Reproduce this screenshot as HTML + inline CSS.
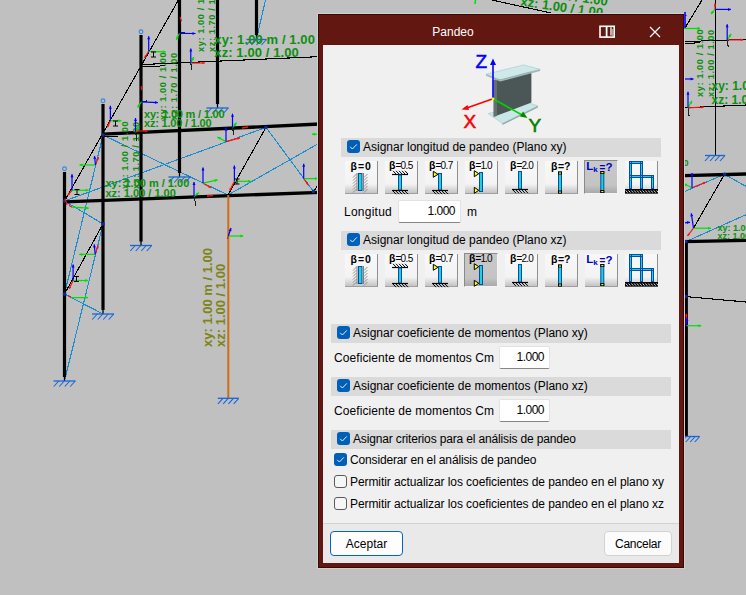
<!DOCTYPE html><html><head><meta charset="utf-8"><style>
*{margin:0;padding:0;box-sizing:border-box}
html,body{width:746px;height:595px;overflow:hidden;background:#c0c0c0;font-family:"Liberation Sans",sans-serif}
.a{position:absolute}
.t{position:absolute;font-size:12px;color:#000;white-space:nowrap;line-height:14px}
.hdr{position:absolute;background:#dadada;height:19px}
.cb{position:absolute;width:13px;height:13px;border-radius:3px;background:#005fb8}
.cb svg{position:absolute;left:0;top:0}
.cbu{position:absolute;width:13px;height:13px;border-radius:3px;background:#f6f6f6;border:1px solid #5a5a5a}
.btn{position:absolute;width:33px;height:33px;background:linear-gradient(#f8f8f8 0%,#f3f3f3 72%,#c4c4c4 100%);border-right:1px solid #8f8f8f;border-bottom:1px solid #a0a0a0}
.btn.p{width:34px;height:34px;background:linear-gradient(#c8c8c8 0%,#c4c4c4 75%,#a9a9a9 100%);border:none;border-top:1px solid #8a8a8a;border-left:1px solid #8a8a8a;border-right:1px solid #f4f4f4;border-bottom:1px solid #f4f4f4}
.btn svg{position:absolute;left:0;top:0;overflow:visible}
.inp{position:absolute;background:#fff;border:1px solid #e2e2e2;border-bottom:1px solid #868686;border-radius:2px;font-size:12px;text-align:right;padding-right:5px;line-height:20px;color:#000;letter-spacing:-0.5px}
</style></head><body><svg class="a" style="left:0;top:0" width="746" height="595" viewBox="0 0 746 595"><rect width="746" height="595" fill="#c0c0c0"/>
<line x1="64.5" y1="201.0" x2="103.0" y2="224.0" stroke="#1a8cd0" stroke-width="1.1" shape-rendering="crispEdges"/>
<line x1="103.0" y1="135.0" x2="65.0" y2="292.0" stroke="#1a8cd0" stroke-width="1.1" shape-rendering="crispEdges"/>
<line x1="103.0" y1="224.0" x2="64.5" y2="381.0" stroke="#1a8cd0" stroke-width="1.1" shape-rendering="crispEdges"/>
<line x1="64.5" y1="294.0" x2="103.0" y2="314.0" stroke="#1a8cd0" stroke-width="1.1" shape-rendering="crispEdges"/>
<line x1="64.5" y1="201.0" x2="266.0" y2="127.4" stroke="#1a8cd0" stroke-width="1.1" shape-rendering="crispEdges"/>
<line x1="103.0" y1="135.0" x2="228.0" y2="195.0" stroke="#1a8cd0" stroke-width="1.1" shape-rendering="crispEdges"/>
<line x1="266.0" y1="127.4" x2="313.5" y2="191.5" stroke="#1a8cd0" stroke-width="1.1" shape-rendering="crispEdges"/>
<line x1="228.0" y1="195.0" x2="330.0" y2="137.0" stroke="#1a8cd0" stroke-width="1.1" shape-rendering="crispEdges"/>
<line x1="256.5" y1="39.0" x2="265.5" y2="0.0" stroke="#1a8cd0" stroke-width="1.1" shape-rendering="crispEdges"/>
<line x1="684.0" y1="191.8" x2="724.5" y2="174.3" stroke="#1a8cd0" stroke-width="1.1" shape-rendering="crispEdges"/>
<line x1="724.5" y1="174.3" x2="746.0" y2="186.4" stroke="#1a8cd0" stroke-width="1.1" shape-rendering="crispEdges"/>
<line x1="686.0" y1="241.6" x2="746.0" y2="214.7" stroke="#1a8cd0" stroke-width="1.1" shape-rendering="crispEdges"/>
<line x1="178.4" y1="0.0" x2="64.5" y2="201.0" stroke="#000" stroke-width="1.1" shape-rendering="crispEdges"/>
<line x1="103.0" y1="224.0" x2="64.5" y2="294.0" stroke="#000" stroke-width="1.1" shape-rendering="crispEdges"/>
<line x1="266.0" y1="127.4" x2="228.0" y2="195.0" stroke="#000" stroke-width="1.1" shape-rendering="crispEdges"/>
<line x1="313.5" y1="191.5" x2="320.0" y2="182.0" stroke="#000" stroke-width="1.1" shape-rendering="crispEdges"/>
<line x1="491.8" y1="0.0" x2="553.4" y2="13.5" stroke="#000" stroke-width="1.1" shape-rendering="crispEdges"/>
<line x1="685.0" y1="28.0" x2="702.0" y2="0.0" stroke="#000" stroke-width="1.1" shape-rendering="crispEdges"/>
<line x1="724.5" y1="174.3" x2="693.5" y2="228.2" stroke="#000" stroke-width="1.1" shape-rendering="crispEdges"/>
<line x1="686.0" y1="296.6" x2="746.0" y2="302.0" stroke="#000" stroke-width="1.1" shape-rendering="crispEdges"/>
<line x1="141.0" y1="64.6" x2="320.0" y2="56.6" stroke="#000" stroke-width="1.1" shape-rendering="crispEdges"/>
<line x1="141.0" y1="66.8" x2="165.0" y2="65.8" stroke="#000" stroke-width="1.0" shape-rendering="crispEdges"/>
<line x1="684.0" y1="41.6" x2="746.0" y2="39.4" stroke="#000" stroke-width="1.0" shape-rendering="crispEdges"/>
<line x1="684.0" y1="43.4" x2="700.0" y2="42.8" stroke="#000" stroke-width="1.0" shape-rendering="crispEdges"/>
<line x1="684.0" y1="107.8" x2="746.0" y2="105.0" stroke="#000" stroke-width="1.1" shape-rendering="crispEdges"/>
<line x1="103.0" y1="136.8" x2="118.0" y2="136.2" stroke="#000" stroke-width="1.0" shape-rendering="crispEdges"/>
<line x1="715.5" y1="0.0" x2="715.5" y2="155.0" stroke="#000" stroke-width="1" shape-rendering="crispEdges"/>
<line x1="103.0" y1="134.2" x2="320.0" y2="124.0" stroke="#000" stroke-width="3.3"/>
<line x1="64.5" y1="201.8" x2="320.0" y2="192.3" stroke="#000" stroke-width="3.3"/>
<line x1="684.0" y1="175.6" x2="746.0" y2="174.0" stroke="#000" stroke-width="3.3"/>
<line x1="684.0" y1="241.6" x2="746.0" y2="240.3" stroke="#000" stroke-width="3.3"/>
<line x1="64.5" y1="172.0" x2="64.5" y2="377.0" stroke="#000" stroke-width="3.2"/>
<line x1="64.5" y1="377.0" x2="64.5" y2="381.0" stroke="#000" stroke-width="1.3"/>
<circle cx="64.5" cy="168.8" r="1.9" fill="none" stroke="#2f86e8" stroke-width="1.1"/>
<line x1="103.0" y1="104.0" x2="103.0" y2="310.0" stroke="#000" stroke-width="3.2"/>
<line x1="103.0" y1="310.0" x2="103.0" y2="314.0" stroke="#000" stroke-width="1.3"/>
<circle cx="103" cy="100.8" r="1.9" fill="none" stroke="#2f86e8" stroke-width="1.1"/>
<line x1="141.0" y1="35.0" x2="141.0" y2="241.5" stroke="#000" stroke-width="3.2"/>
<line x1="141.0" y1="241.0" x2="141.0" y2="245.5" stroke="#000" stroke-width="1.3"/>
<circle cx="141" cy="31.8" r="1.9" fill="none" stroke="#2f86e8" stroke-width="1.1"/>
<line x1="179.5" y1="0.0" x2="179.5" y2="173.0" stroke="#000" stroke-width="3.2"/>
<line x1="179.5" y1="173.0" x2="179.5" y2="177.0" stroke="#000" stroke-width="1.3"/>
<line x1="217.5" y1="0.0" x2="217.5" y2="104.0" stroke="#000" stroke-width="3.2"/>
<line x1="217.5" y1="104.0" x2="217.5" y2="108.0" stroke="#000" stroke-width="1.3"/>
<line x1="256.5" y1="0.0" x2="256.5" y2="35.0" stroke="#000" stroke-width="3.2"/>
<line x1="256.5" y1="35.0" x2="256.5" y2="39.5" stroke="#000" stroke-width="1.3"/>
<line x1="686.3" y1="241.0" x2="686.3" y2="436.0" stroke="#000" stroke-width="3.2"/>
<line x1="228.3" y1="195.0" x2="228.3" y2="398.0" stroke="#d06c14" stroke-width="2"/>
<circle cx="64.5" cy="201" r="1.8" fill="#0a2a9a"/>
<circle cx="103" cy="135" r="1.8" fill="#0a2a9a"/>
<circle cx="103" cy="224" r="1.8" fill="#0a2a9a"/>
<circle cx="64.5" cy="294" r="1.8" fill="#0a2a9a"/>
<circle cx="266" cy="127.4" r="1.8" fill="#0a2a9a"/>
<circle cx="313.5" cy="191.5" r="1.8" fill="#0a2a9a"/>
<circle cx="724.5" cy="174.3" r="1.8" fill="#0a2a9a"/>
<circle cx="686" cy="241.6" r="1.8" fill="#0a2a9a"/>
<circle cx="686" cy="296.6" r="1.8" fill="#0a2a9a"/>
<line x1="53.5" y1="381" x2="75.5" y2="381" stroke="#1666d8" stroke-width="1.3"/>
<line x1="58.75" y1="381" x2="53.75" y2="386.5" stroke="#1666d8" stroke-width="1.1"/>
<line x1="64.25" y1="381" x2="59.25" y2="386.5" stroke="#1666d8" stroke-width="1.1"/>
<line x1="69.75" y1="381" x2="64.75" y2="386.5" stroke="#1666d8" stroke-width="1.1"/>
<line x1="75.25" y1="381" x2="70.25" y2="386.5" stroke="#1666d8" stroke-width="1.1"/>
<line x1="92.0" y1="314" x2="114.0" y2="314" stroke="#1666d8" stroke-width="1.3"/>
<line x1="97.25" y1="314" x2="92.25" y2="319.5" stroke="#1666d8" stroke-width="1.1"/>
<line x1="102.75" y1="314" x2="97.75" y2="319.5" stroke="#1666d8" stroke-width="1.1"/>
<line x1="108.25" y1="314" x2="103.25" y2="319.5" stroke="#1666d8" stroke-width="1.1"/>
<line x1="113.75" y1="314" x2="108.75" y2="319.5" stroke="#1666d8" stroke-width="1.1"/>
<line x1="130.0" y1="245.5" x2="152.0" y2="245.5" stroke="#1666d8" stroke-width="1.3"/>
<line x1="135.25" y1="245.5" x2="130.25" y2="251.0" stroke="#1666d8" stroke-width="1.1"/>
<line x1="140.75" y1="245.5" x2="135.75" y2="251.0" stroke="#1666d8" stroke-width="1.1"/>
<line x1="146.25" y1="245.5" x2="141.25" y2="251.0" stroke="#1666d8" stroke-width="1.1"/>
<line x1="151.75" y1="245.5" x2="146.75" y2="251.0" stroke="#1666d8" stroke-width="1.1"/>
<line x1="168.5" y1="177" x2="190.5" y2="177" stroke="#1666d8" stroke-width="1.3"/>
<line x1="173.75" y1="177" x2="168.75" y2="182.5" stroke="#1666d8" stroke-width="1.1"/>
<line x1="179.25" y1="177" x2="174.25" y2="182.5" stroke="#1666d8" stroke-width="1.1"/>
<line x1="184.75" y1="177" x2="179.75" y2="182.5" stroke="#1666d8" stroke-width="1.1"/>
<line x1="190.25" y1="177" x2="185.25" y2="182.5" stroke="#1666d8" stroke-width="1.1"/>
<line x1="206.5" y1="108" x2="228.5" y2="108" stroke="#1666d8" stroke-width="1.3"/>
<line x1="211.75" y1="108" x2="206.75" y2="113.5" stroke="#1666d8" stroke-width="1.1"/>
<line x1="217.25" y1="108" x2="212.25" y2="113.5" stroke="#1666d8" stroke-width="1.1"/>
<line x1="222.75" y1="108" x2="217.75" y2="113.5" stroke="#1666d8" stroke-width="1.1"/>
<line x1="228.25" y1="108" x2="223.25" y2="113.5" stroke="#1666d8" stroke-width="1.1"/>
<line x1="246.5" y1="39.5" x2="266.5" y2="39.5" stroke="#1666d8" stroke-width="1.3"/>
<line x1="251.5" y1="39.5" x2="246.5" y2="45.0" stroke="#1666d8" stroke-width="1.1"/>
<line x1="256.5" y1="39.5" x2="251.5" y2="45.0" stroke="#1666d8" stroke-width="1.1"/>
<line x1="261.5" y1="39.5" x2="256.5" y2="45.0" stroke="#1666d8" stroke-width="1.1"/>
<line x1="266.5" y1="39.5" x2="261.5" y2="45.0" stroke="#1666d8" stroke-width="1.1"/>
<line x1="217.8" y1="398.3" x2="238.8" y2="398.3" stroke="#1666d8" stroke-width="1.3"/>
<line x1="222.925" y1="398.3" x2="217.925" y2="403.8" stroke="#1666d8" stroke-width="1.1"/>
<line x1="228.175" y1="398.3" x2="223.175" y2="403.8" stroke="#1666d8" stroke-width="1.1"/>
<line x1="233.425" y1="398.3" x2="228.425" y2="403.8" stroke="#1666d8" stroke-width="1.1"/>
<line x1="238.675" y1="398.3" x2="233.675" y2="403.8" stroke="#1666d8" stroke-width="1.1"/>
<line x1="705.0" y1="155.5" x2="725.0" y2="155.5" stroke="#1666d8" stroke-width="1.3"/>
<line x1="710.0" y1="155.5" x2="705.0" y2="161.0" stroke="#1666d8" stroke-width="1.1"/>
<line x1="715.0" y1="155.5" x2="710.0" y2="161.0" stroke="#1666d8" stroke-width="1.1"/>
<line x1="720.0" y1="155.5" x2="715.0" y2="161.0" stroke="#1666d8" stroke-width="1.1"/>
<line x1="725.0" y1="155.5" x2="720.0" y2="161.0" stroke="#1666d8" stroke-width="1.1"/>
<line x1="681.5" y1="436.5" x2="699.5" y2="436.5" stroke="#1666d8" stroke-width="1.3"/>
<line x1="686.25" y1="436.5" x2="681.25" y2="442.0" stroke="#1666d8" stroke-width="1.1"/>
<line x1="690.75" y1="436.5" x2="685.75" y2="442.0" stroke="#1666d8" stroke-width="1.1"/>
<line x1="695.25" y1="436.5" x2="690.25" y2="442.0" stroke="#1666d8" stroke-width="1.1"/>
<line x1="699.75" y1="436.5" x2="694.75" y2="442.0" stroke="#1666d8" stroke-width="1.1"/>
<text x="214.3" y="43.7" font-family="Liberation Sans" font-size="13" font-weight="bold" fill="#0c900c" text-anchor="start" letter-spacing="0.1">xy: 1.00 m / 1.00</text>
<text x="214.3" y="56.8" font-family="Liberation Sans" font-size="13" font-weight="bold" fill="#0c900c" text-anchor="start" letter-spacing="0.1">xz: 1.00 / 1.00</text>
<text x="144" y="117.7" font-family="Liberation Sans" font-size="11" font-weight="bold" fill="#0c900c" text-anchor="start" letter-spacing="-0.2">xy: 1.00 m / 1.00</text>
<text x="144" y="126.5" font-family="Liberation Sans" font-size="11" font-weight="bold" fill="#0c900c" text-anchor="start" letter-spacing="-0.2">xz: 1.00 / 1.00</text>
<text x="105.5" y="187.2" font-family="Liberation Sans" font-size="11" font-weight="bold" fill="#0c900c" text-anchor="start" letter-spacing="0">xy: 1.00 m / 1.00</text>
<text x="105.5" y="197.2" font-family="Liberation Sans" font-size="11" font-weight="bold" fill="#0c900c" text-anchor="start" letter-spacing="0">xz: 1.00 / 1.00</text>
<text x="204.2" y="52" font-family="Liberation Sans" font-size="9.2" font-weight="bold" fill="#0c900c" text-anchor="start" letter-spacing="0.6" transform="rotate(-90 204.2 52)">xy: 1.00 / 1.00</text>
<text x="214.7" y="52" font-family="Liberation Sans" font-size="9.2" font-weight="bold" fill="#0c900c" text-anchor="start" letter-spacing="0.6" transform="rotate(-90 214.7 52)">xz: 1.70 / 1.00</text>
<text x="165.5" y="120" font-family="Liberation Sans" font-size="9.2" font-weight="bold" fill="#0c900c" text-anchor="start" letter-spacing="0.6" transform="rotate(-90 165.5 120)">xy: 1.00 / 1.00</text>
<text x="176.5" y="120" font-family="Liberation Sans" font-size="9.2" font-weight="bold" fill="#0c900c" text-anchor="start" letter-spacing="0.6" transform="rotate(-90 176.5 120)">xz: 1.70 / 1.00</text>
<text x="127.8" y="189" font-family="Liberation Sans" font-size="9.2" font-weight="bold" fill="#0c900c" text-anchor="start" letter-spacing="0.6" transform="rotate(-90 127.8 189)">xy: 1.00 / 1.00</text>
<text x="138.8" y="189" font-family="Liberation Sans" font-size="9.2" font-weight="bold" fill="#0c900c" text-anchor="start" letter-spacing="0.6" transform="rotate(-90 138.8 189)">xz: 1.70 / 1.00</text>
<text x="212.3" y="347" font-family="Liberation Sans" font-size="13" font-weight="bold" fill="#7f8418" text-anchor="start" letter-spacing="0" transform="rotate(-90 212.3 347)">xy: 1.00 m / 1.00</text>
<text x="225.3" y="347" font-family="Liberation Sans" font-size="13" font-weight="bold" fill="#7f8418" text-anchor="start" letter-spacing="0" transform="rotate(-90 225.3 347)">xz: 1.00 / 1.00</text>
<text x="703" y="97" font-family="Liberation Sans" font-size="9.2" font-weight="bold" fill="#0c900c" text-anchor="start" letter-spacing="0.6" transform="rotate(-90 703 97)">xy: 1.00 / 1.00</text>
<line x1="475.5" y1="0.0" x2="475.0" y2="4.0" stroke="#00e000" stroke-width="1.5"/>
<text x="713.5" y="97" font-family="Liberation Sans" font-size="9.2" font-weight="bold" fill="#0c900c" text-anchor="start" letter-spacing="0.6" transform="rotate(-90 713.5 97)">xz: 1.00 / 1.00</text>
<text x="711.5" y="90" font-family="Liberation Sans" font-size="12" font-weight="bold" fill="#0c900c" text-anchor="start" letter-spacing="0">xy: 1.00 m / 1.00</text>
<text x="711.5" y="104" font-family="Liberation Sans" font-size="12" font-weight="bold" fill="#0c900c" text-anchor="start" letter-spacing="0">xz: 1.00 / 1.00</text>
<text x="717.5" y="231" font-family="Liberation Sans" font-size="9" font-weight="bold" fill="#0c900c" text-anchor="start" letter-spacing="0">xy: 1.00 m</text>
<text x="717.5" y="239" font-family="Liberation Sans" font-size="9" font-weight="bold" fill="#0c900c" text-anchor="start" letter-spacing="0">xz: 1.00</text>
<text x="520" y="5.6" font-family="Liberation Sans" font-size="13" font-weight="bold" fill="#0c900c" text-anchor="start" letter-spacing="0" transform="rotate(8 520 5.6)">xz: 1.00 / 1.00</text>
<text x="509" y="-8" font-family="Liberation Sans" font-size="13" font-weight="bold" fill="#0c900c" text-anchor="start" letter-spacing="0" transform="rotate(8 509 -8)">xy: 1.00 m / 1.00</text>
<text x="671" y="165.5" font-family="Liberation Sans" font-size="9" font-weight="bold" fill="#0c900c" text-anchor="start" letter-spacing="0">1.00</text>
<line x1="110.4" y1="120.7" x2="107.4" y2="127.2" stroke="#ff1010" stroke-width="1.2"/>
<polygon points="107.4,127.2 107.3,124.4 109.6,125.5" fill="#ff1010"/>
<line x1="110.4" y1="120.7" x2="121.4" y2="120.7" stroke="#00e000" stroke-width="1.2"/>
<polygon points="121.4,120.7 118.4,122.2 118.4,119.2" fill="#00e000"/>
<line x1="110.4" y1="120.7" x2="110.4" y2="105.7" stroke="#0000ff" stroke-width="1.2"/>
<polygon points="110.4,105.7 111.9,108.7 108.9,108.7" fill="#0000ff"/>
<path d="M113.0 121.0h5M115.5 121.0v5M113.0 126.0h5" stroke="#000" stroke-width="1"/>
<line x1="148.7" y1="51.3" x2="144.5" y2="58.0" stroke="#ff1010" stroke-width="1.2"/>
<polygon points="144.5,58.0 144.8,55.2 146.9,56.5" fill="#ff1010"/>
<line x1="148.7" y1="51.3" x2="165.7" y2="51.8" stroke="#00e000" stroke-width="1.2"/>
<polygon points="165.7,51.8 162.7,53.2 162.7,50.2" fill="#00e000"/>
<line x1="148.7" y1="51.3" x2="148.7" y2="36.3" stroke="#0000ff" stroke-width="1.2"/>
<polygon points="148.7,36.3 150.2,39.3 147.2,39.3" fill="#0000ff"/>
<path d="M151.0 52.0h5M153.5 52.0v5M151.0 57.0h5" stroke="#000" stroke-width="1"/>
<line x1="179.5" y1="33.3" x2="184.5" y2="32.3" stroke="#202020" stroke-width="1.1" shape-rendering="crispEdges"/>
<line x1="179.5" y1="33.3" x2="176.3" y2="39.7" stroke="#00e000" stroke-width="1.2"/>
<polygon points="176.3,39.7 176.3,36.3 179.0,37.7" fill="#00e000"/>
<line x1="179.5" y1="33.3" x2="195.5" y2="33.5" stroke="#0000ff" stroke-width="1.2"/>
<polygon points="195.5,33.5 192.5,35.0 192.5,32.0" fill="#0000ff"/>
<line x1="141.5" y1="101.8" x2="147.5" y2="100.8" stroke="#202020" stroke-width="1.1" shape-rendering="crispEdges"/>
<line x1="141.5" y1="101.8" x2="137.5" y2="107.4" stroke="#00e000" stroke-width="1.2"/>
<polygon points="137.5,107.4 138.0,104.1 140.5,105.8" fill="#00e000"/>
<line x1="141.5" y1="101.8" x2="157.9" y2="102.6" stroke="#0000ff" stroke-width="1.2"/>
<polygon points="157.9,102.6 154.8,104.0 155.0,101.0" fill="#0000ff"/>
<line x1="180.0" y1="17.0" x2="181.5" y2="21.0" stroke="#ff1010" stroke-width="1.2"/>
<line x1="141.0" y1="86.0" x2="142.0" y2="90.0" stroke="#ff1010" stroke-width="1.2"/>
<line x1="65.0" y1="198.5" x2="67.0" y2="205.0" stroke="#ff1010" stroke-width="1.2"/>
<line x1="190.8" y1="63.0" x2="192.0" y2="69.5" stroke="#202020" stroke-width="1.1" shape-rendering="crispEdges"/>
<line x1="190.8" y1="63.0" x2="204.8" y2="63.0" stroke="#ff1010" stroke-width="1.2"/>
<polygon points="204.8,63.0 202.3,64.2 202.3,61.8" fill="#ff1010"/>
<line x1="190.8" y1="63.0" x2="193.8" y2="57.0" stroke="#00e000" stroke-width="1.2"/>
<polygon points="193.8,57.0 193.8,60.4 191.1,59.0" fill="#00e000"/>
<line x1="190.8" y1="63.0" x2="190.8" y2="48.5" stroke="#0000ff" stroke-width="1.2"/>
<polygon points="190.8,48.5 192.3,51.5 189.3,51.5" fill="#0000ff"/>
<line x1="135.5" y1="131.0" x2="137.0" y2="141.0" stroke="#202020" stroke-width="1.1" shape-rendering="crispEdges"/>
<line x1="135.5" y1="131.0" x2="147.5" y2="131.0" stroke="#ff1010" stroke-width="1.2"/>
<polygon points="147.5,131.0 145.0,132.2 145.0,129.8" fill="#ff1010"/>
<line x1="135.5" y1="131.0" x2="139.0" y2="126.0" stroke="#00e000" stroke-width="1.2"/>
<polygon points="139.0,126.0 138.5,129.3 136.1,127.6" fill="#00e000"/>
<line x1="135.5" y1="131.0" x2="135.5" y2="118.0" stroke="#0000ff" stroke-width="1.2"/>
<polygon points="135.5,118.0 137.0,121.0 134.0,121.0" fill="#0000ff"/>
<line x1="194.0" y1="196.6" x2="196.0" y2="205.6" stroke="#202020" stroke-width="1.1" shape-rendering="crispEdges"/>
<line x1="194.0" y1="196.6" x2="199.0" y2="192.6" stroke="#00e000" stroke-width="1.2"/>
<polygon points="199.0,192.6 197.6,195.6 195.7,193.3" fill="#00e000"/>
<line x1="194.0" y1="196.6" x2="194.0" y2="182.1" stroke="#0000ff" stroke-width="1.2"/>
<polygon points="194.0,182.1 195.5,185.1 192.5,185.1" fill="#0000ff"/>
<line x1="232.5" y1="127.7" x2="234.0" y2="135.2" stroke="#202020" stroke-width="1.1" shape-rendering="crispEdges"/>
<line x1="232.5" y1="127.7" x2="236.5" y2="122.7" stroke="#00e000" stroke-width="1.2"/>
<polygon points="236.5,122.7 235.8,126.0 233.5,124.1" fill="#00e000"/>
<line x1="232.5" y1="127.7" x2="232.5" y2="113.7" stroke="#0000ff" stroke-width="1.2"/>
<polygon points="232.5,113.7 234.0,116.7 231.0,116.7" fill="#0000ff"/>
<line x1="242.0" y1="128.0" x2="248.0" y2="127.0" stroke="#ff1010" stroke-width="1.3"/>
<line x1="207.0" y1="196.0" x2="213.0" y2="195.6" stroke="#ff1010" stroke-width="1.3"/>
<line x1="226.0" y1="141.6" x2="240.0" y2="137.9" stroke="#ff1010" stroke-width="1.2"/>
<polygon points="240.0,137.9 237.9,139.7 237.3,137.3" fill="#ff1010"/>
<line x1="226.0" y1="141.6" x2="217.4" y2="137.0" stroke="#00e000" stroke-width="1.2"/>
<polygon points="217.4,137.0 220.8,137.1 219.3,139.7" fill="#00e000"/>
<line x1="226.0" y1="141.6" x2="226.0" y2="127.6" stroke="#0000ff" stroke-width="1.2"/>
<polygon points="226.0,127.6 227.5,130.6 224.5,130.6" fill="#0000ff"/>
<line x1="203.0" y1="183.2" x2="211.0" y2="187.8" stroke="#ff1010" stroke-width="1.2"/>
<polygon points="211.0,187.8 208.2,187.6 209.5,185.5" fill="#ff1010"/>
<line x1="203.0" y1="183.2" x2="217.7" y2="179.9" stroke="#00e000" stroke-width="1.2"/>
<polygon points="217.7,179.9 215.1,182.0 214.4,179.1" fill="#00e000"/>
<line x1="203.0" y1="183.2" x2="203.0" y2="167.5" stroke="#0000ff" stroke-width="1.2"/>
<polygon points="203.0,167.5 204.5,170.5 201.5,170.5" fill="#0000ff"/>
<line x1="234.4" y1="181.3" x2="229.7" y2="190.6" stroke="#ff1010" stroke-width="1.2"/>
<polygon points="229.7,190.6 229.7,187.8 231.9,188.9" fill="#ff1010"/>
<line x1="234.4" y1="181.3" x2="251.0" y2="181.3" stroke="#00e000" stroke-width="1.2"/>
<polygon points="251.0,181.3 248.0,182.8 248.0,179.8" fill="#00e000"/>
<line x1="234.4" y1="181.3" x2="234.4" y2="165.6" stroke="#0000ff" stroke-width="1.2"/>
<polygon points="234.4,165.6 235.9,168.6 232.9,168.6" fill="#0000ff"/>
<path d="M234.5 179.0h5M237 179.0v5M234.5 184.0h5" stroke="#000" stroke-width="1"/>
<line x1="303.7" y1="178.6" x2="308.3" y2="185.0" stroke="#ff1010" stroke-width="1.2"/>
<polygon points="308.3,185.0 305.8,183.7 307.9,182.2" fill="#ff1010"/>
<line x1="303.7" y1="178.6" x2="318.0" y2="178.6" stroke="#00e000" stroke-width="1.2"/>
<polygon points="318.0,178.6 315.0,180.1 315.0,177.1" fill="#00e000"/>
<line x1="303.7" y1="178.6" x2="303.7" y2="163.8" stroke="#0000ff" stroke-width="1.2"/>
<polygon points="303.7,163.8 305.2,166.8 302.2,166.8" fill="#0000ff"/>
<line x1="318.0" y1="134.2" x2="312.0" y2="134.2" stroke="#00e000" stroke-width="1.3"/>
<polygon points="312.0,134.2 315.0,132.7 315.0,135.7" fill="#00e000"/>
<line x1="228.3" y1="236.0" x2="227.3" y2="239.0" stroke="#ff1010" stroke-width="1.2"/>
<line x1="228.3" y1="236.0" x2="243.3" y2="236.0" stroke="#00e000" stroke-width="1.2"/>
<polygon points="243.3,236.0 240.3,237.5 240.3,234.5" fill="#00e000"/>
<line x1="228.3" y1="236.0" x2="231.0" y2="228.0" stroke="#0000ff" stroke-width="1.2"/>
<polygon points="231.0,228.0 231.5,231.3 228.6,230.4" fill="#0000ff"/>
<line x1="72.0" y1="190.3" x2="67.7" y2="195.3" stroke="#ff1010" stroke-width="1.2"/>
<polygon points="67.7,195.3 68.4,192.6 70.3,194.2" fill="#ff1010"/>
<line x1="72.0" y1="190.3" x2="88.7" y2="190.3" stroke="#00e000" stroke-width="1.2"/>
<polygon points="88.7,190.3 85.7,191.8 85.7,188.8" fill="#00e000"/>
<line x1="72.0" y1="190.3" x2="72.0" y2="174.3" stroke="#0000ff" stroke-width="1.2"/>
<polygon points="72.0,174.3 73.5,177.3 70.5,177.3" fill="#0000ff"/>
<path d="M74.5 189.5h5M77 189.5v5M74.5 194.5h5" stroke="#000" stroke-width="1"/>
<line x1="72.0" y1="207.2" x2="69.0" y2="205.2" stroke="#ff1010" stroke-width="1.2"/>
<line x1="72.0" y1="207.2" x2="88.7" y2="208.2" stroke="#00e000" stroke-width="1.2"/>
<polygon points="88.7,208.2 85.6,209.5 85.8,206.5" fill="#00e000"/>
<line x1="95.5" y1="165.0" x2="98.5" y2="157.0" stroke="#ff1010" stroke-width="1.2"/>
<polygon points="98.5,157.0 98.8,159.8 96.5,158.9" fill="#ff1010"/>
<line x1="95.5" y1="165.0" x2="79.5" y2="165.0" stroke="#00e000" stroke-width="1.2"/>
<polygon points="79.5,165.0 82.5,163.5 82.5,166.5" fill="#00e000"/>
<line x1="95.5" y1="165.0" x2="94.5" y2="156.0" stroke="#0000ff" stroke-width="1.2"/>
<polygon points="94.5,156.0 96.3,158.8 93.3,159.1" fill="#0000ff"/>
<line x1="95.2" y1="254.4" x2="98.2" y2="245.4" stroke="#ff1010" stroke-width="1.2"/>
<polygon points="98.2,245.4 98.6,248.2 96.2,247.4" fill="#ff1010"/>
<line x1="95.2" y1="254.4" x2="79.2" y2="254.4" stroke="#00e000" stroke-width="1.2"/>
<polygon points="79.2,254.4 82.2,252.9 82.2,255.9" fill="#00e000"/>
<line x1="95.2" y1="254.4" x2="94.2" y2="244.4" stroke="#0000ff" stroke-width="1.2"/>
<polygon points="94.2,244.4 96.0,247.2 93.0,247.5" fill="#0000ff"/>
<line x1="73.1" y1="280.5" x2="69.1" y2="289.0" stroke="#ff1010" stroke-width="1.2"/>
<polygon points="69.1,289.0 69.0,286.2 71.3,287.3" fill="#ff1010"/>
<line x1="73.1" y1="280.5" x2="88.1" y2="280.5" stroke="#00e000" stroke-width="1.2"/>
<polygon points="88.1,280.5 85.1,282.0 85.1,279.0" fill="#00e000"/>
<line x1="73.1" y1="280.5" x2="73.1" y2="264.5" stroke="#0000ff" stroke-width="1.2"/>
<polygon points="73.1,264.5 74.6,267.5 71.6,267.5" fill="#0000ff"/>
<path d="M74.0 276.5h5M76.5 276.5v5M74.0 281.5h5" stroke="#000" stroke-width="1"/>
<line x1="71.1" y1="297.6" x2="68.1" y2="295.6" stroke="#ff1010" stroke-width="1.2"/>
<line x1="71.1" y1="297.6" x2="88.1" y2="297.6" stroke="#00e000" stroke-width="1.2"/>
<polygon points="88.1,297.6 85.1,299.1 85.1,296.1" fill="#00e000"/>
<line x1="715.0" y1="9.4" x2="715.0" y2="3.4" stroke="#ff1010" stroke-width="1.2"/>
<polygon points="715.0,3.4 716.2,5.9 713.8,5.9" fill="#ff1010"/>
<line x1="715.0" y1="9.4" x2="711.0" y2="14.0" stroke="#00e000" stroke-width="1.2"/>
<polygon points="711.0,14.0 711.8,10.8 714.1,12.7" fill="#00e000"/>
<line x1="715.0" y1="9.4" x2="731.0" y2="9.4" stroke="#0000ff" stroke-width="1.2"/>
<polygon points="731.0,9.4 728.0,10.9 728.0,7.9" fill="#0000ff"/>
<line x1="727.2" y1="39.9" x2="728.2" y2="46.9" stroke="#202020" stroke-width="1.1" shape-rendering="crispEdges"/>
<line x1="727.2" y1="39.9" x2="743.2" y2="39.9" stroke="#ff1010" stroke-width="1.2"/>
<polygon points="743.2,39.9 740.7,41.1 740.7,38.6" fill="#ff1010"/>
<line x1="727.2" y1="39.9" x2="731.2" y2="33.9" stroke="#00e000" stroke-width="1.2"/>
<polygon points="731.2,33.9 730.8,37.2 728.3,35.6" fill="#00e000"/>
<line x1="727.2" y1="39.9" x2="727.2" y2="24.3" stroke="#0000ff" stroke-width="1.2"/>
<polygon points="727.2,24.3 728.7,27.3 725.7,27.3" fill="#0000ff"/>
<line x1="684.0" y1="79.0" x2="693.5" y2="79.0" stroke="#0000ff" stroke-width="1.2"/>
<polygon points="693.5,79.0 690.5,80.5 690.5,77.5" fill="#0000ff"/>
<line x1="688.0" y1="107.8" x2="689.0" y2="115.8" stroke="#202020" stroke-width="1.1" shape-rendering="crispEdges"/>
<line x1="688.0" y1="107.8" x2="704.0" y2="107.0" stroke="#ff1010" stroke-width="1.2"/>
<polygon points="704.0,107.0 701.6,108.4 701.4,105.9" fill="#ff1010"/>
<line x1="688.0" y1="107.8" x2="692.0" y2="100.8" stroke="#00e000" stroke-width="1.2"/>
<polygon points="692.0,100.8 691.8,104.1 689.2,102.7" fill="#00e000"/>
<line x1="688.0" y1="107.8" x2="688.0" y2="91.8" stroke="#0000ff" stroke-width="1.2"/>
<polygon points="688.0,91.8 689.5,94.8 686.5,94.8" fill="#0000ff"/>
<line x1="692.0" y1="187.7" x2="705.6" y2="182.3" stroke="#ff1010" stroke-width="1.2"/>
<polygon points="705.6,182.3 703.7,184.4 702.8,182.1" fill="#ff1010"/>
<line x1="692.0" y1="187.7" x2="684.0" y2="183.7" stroke="#00e000" stroke-width="1.2"/>
<polygon points="684.0,183.7 687.4,183.7 686.0,186.4" fill="#00e000"/>
<line x1="692.0" y1="187.7" x2="692.0" y2="173.0" stroke="#0000ff" stroke-width="1.2"/>
<polygon points="692.0,173.0 693.5,176.0 690.5,176.0" fill="#0000ff"/>
<line x1="693.5" y1="228.2" x2="687.5" y2="236.0" stroke="#ff1010" stroke-width="1.2"/>
<polygon points="687.5,236.0 688.0,233.3 690.0,234.8" fill="#ff1010"/>
<line x1="693.5" y1="228.2" x2="711.0" y2="228.2" stroke="#00e000" stroke-width="1.2"/>
<polygon points="711.0,228.2 708.0,229.7 708.0,226.7" fill="#00e000"/>
<line x1="693.5" y1="228.2" x2="691.3" y2="213.3" stroke="#0000ff" stroke-width="1.2"/>
<polygon points="691.3,213.3 693.2,216.0 690.3,216.5" fill="#0000ff"/>
<line x1="684.0" y1="222.8" x2="690.0" y2="222.3" stroke="#0000ff" stroke-width="1.2"/>
<polygon points="690.0,222.3 687.1,224.0 686.9,221.1" fill="#0000ff"/>
<line x1="686.0" y1="185.0" x2="684.0" y2="185.0" stroke="#00e000" stroke-width="1.2"/>
<line x1="686.3" y1="325.7" x2="686.3" y2="313.7" stroke="#ff1010" stroke-width="1.2"/>
<polygon points="686.3,313.7 687.5,316.2 685.0,316.2" fill="#ff1010"/>
<line x1="686.3" y1="325.7" x2="701.3" y2="325.7" stroke="#00e000" stroke-width="1.2"/>
<polygon points="701.3,325.7 698.3,327.2 698.3,324.2" fill="#00e000"/>
<line x1="686.3" y1="325.7" x2="687.3" y2="317.7" stroke="#0000ff" stroke-width="1.2"/>
<polygon points="687.3,317.7 688.4,320.9 685.4,320.5" fill="#0000ff"/></svg><div class="a" style="left:317px;top:13px;width:368px;height:556px;border:1px solid #cdd0d0"></div><div class="a" style="left:318px;top:14px;width:366px;height:554px;background:#621711;border:1px solid #3a0606"></div><div class="a" style="left:323px;top:45px;width:356px;height:518px;background:#f0f0f0"></div><div class="t" style="left:403px;top:25px;width:100px;text-align:center;color:#fff">Pandeo</div><svg class="a" style="left:596px;top:22px" width="24" height="18" viewBox="596 22 24 18"><rect x="600" y="26.3" width="14.2" height="10.8" fill="none" stroke="#fff" stroke-width="1.6"/><line x1="606.6" y1="26" x2="606.6" y2="37" stroke="#fff" stroke-width="1.8"/><line x1="611" y1="27.2" x2="611" y2="35.5" stroke="#fff" stroke-width="1.3"/><line x1="612.7" y1="29" x2="612.7" y2="36" stroke="#f0d8d8" stroke-width="0.8"/></svg><svg class="a" style="left:649px;top:26px" width="12" height="12" viewBox="0 0 12 12"><path d="M1 1 L11 11 M11 1 L1 11" stroke="#fff" stroke-width="1.2"/></svg><svg class="a" style="left:440px;top:45px" width="120" height="95" viewBox="440 45 120 95">
<polygon points="488.2,113.6 529.7,103.2 537.9,105.9 502.4,123.4" fill="#c9e6e8" stroke="#a8c4c6" stroke-width="0.6"/>
<polygon points="502.4,123.4 537.9,105.9 537.9,107.4 502.4,125" fill="#8fa8aa"/>
<polygon points="493.7,80 531.4,70.5 531.4,102.6 493.7,116.8" fill="#4b5757"/>
<polygon points="493.7,80 497,79 497,116 493.7,116.8" fill="#67706f"/>
<polygon points="486,74.2 523.7,64.9 540.1,69.3 500.2,79.7" fill="#cde9ea" stroke="#a9c6c8" stroke-width="0.6"/>
<polygon points="486,74.2 500.2,79.7 540.1,69.3 540.1,71 500.2,81.5 486,75.8" fill="#9fb9bb"/>
<line x1="493" y1="98.8" x2="493" y2="63" stroke="#0000ff" stroke-width="1.6"/>
<polygon points="493,58.5 490,65 496,65" fill="#0000ff"/>
<line x1="493" y1="98.8" x2="466" y2="108.2" stroke="#ff0000" stroke-width="1.6"/>
<polygon points="461.5,109.6 467.5,105 469,110" fill="#ff0000"/>
<line x1="493" y1="98.8" x2="523" y2="115.5" stroke="#00d000" stroke-width="1.6"/>
<polygon points="527.5,118 520,116.5 523,111.5" fill="#008a00"/>
<circle cx="493" cy="98.8" r="1.4" fill="#ffff00"/>
<text x="475.5" y="68" font-family="Liberation Sans" font-size="19" fill="#0000ff" stroke="#0000ff" stroke-width="0.55">Z</text>
<text x="463.5" y="128" font-family="Liberation Sans" font-size="19" fill="#ff0000" stroke="#ff0000" stroke-width="0.55">X</text>
<text x="528.5" y="132" font-family="Liberation Sans" font-size="19" fill="#008000" stroke="#008000" stroke-width="0.55">Y</text>
</svg><div class="hdr" style="left:341px;top:138px;width:320px"></div><div class="cb" style="left:347px;top:140px"><svg width="13" height="13" viewBox="0 0 13 13"><path d="M3.2 6.8 L5.4 9 L9.8 4.4" fill="none" stroke="#fff" stroke-width="0.9"/></svg></div><div class="t" style="left:363px;top:140px;">Asignar longitud de pandeo (Plano xy)</div><div class="hdr" style="left:341px;top:231px;width:320px"></div><div class="cb" style="left:347px;top:233px"><svg width="13" height="13" viewBox="0 0 13 13"><path d="M3.2 6.8 L5.4 9 L9.8 4.4" fill="none" stroke="#fff" stroke-width="0.9"/></svg></div><div class="t" style="left:363px;top:233px;">Asignar longitud de pandeo (Plano xz)</div><div class="hdr" style="left:331px;top:324px;width:340px"></div><div class="cb" style="left:337px;top:326px"><svg width="13" height="13" viewBox="0 0 13 13"><path d="M3.2 6.8 L5.4 9 L9.8 4.4" fill="none" stroke="#fff" stroke-width="0.9"/></svg></div><div class="t" style="left:353px;top:326px;">Asignar coeficiente de momentos (Plano xy)</div><div class="hdr" style="left:331px;top:377px;width:340px"></div><div class="cb" style="left:337px;top:379px"><svg width="13" height="13" viewBox="0 0 13 13"><path d="M3.2 6.8 L5.4 9 L9.8 4.4" fill="none" stroke="#fff" stroke-width="0.9"/></svg></div><div class="t" style="left:353px;top:379px;">Asignar coeficiente de momentos (Plano xz)</div><div class="hdr" style="left:331px;top:430px;width:340px"></div><div class="cb" style="left:337px;top:432px"><svg width="13" height="13" viewBox="0 0 13 13"><path d="M3.2 6.8 L5.4 9 L9.8 4.4" fill="none" stroke="#fff" stroke-width="0.9"/></svg></div><div class="t" style="left:353px;top:432px;"><span style="letter-spacing:-0.15px">Asignar criterios para el análisis de pandeo</span></div><div class="t" style="left:344px;top:205px;letter-spacing:0.25px">Longitud</div><div class="inp" style="left:398px;top:200px;width:63px;height:23px;line-height:21px">1.000</div><div class="t" style="left:467px;top:205px;">m</div><div class="t" style="left:334px;top:351px;letter-spacing:0.08px">Coeficiente de momentos Cm</div><div class="inp" style="left:499px;top:346px;width:51px;height:23px;line-height:21px">1.000</div><div class="t" style="left:334px;top:404px;letter-spacing:0.08px">Coeficiente de momentos Cm</div><div class="inp" style="left:499px;top:399px;width:51px;height:23px;line-height:21px">1.000</div><div class="cb" style="left:334px;top:453px"><svg width="13" height="13" viewBox="0 0 13 13"><path d="M3.2 6.8 L5.4 9 L9.8 4.4" fill="none" stroke="#fff" stroke-width="0.9"/></svg></div><div class="t" style="left:350px;top:453px;letter-spacing:-0.15px">Considerar en el análisis de pandeo</div><div class="cbu" style="left:334px;top:475px"></div><div class="t" style="left:350px;top:475px;letter-spacing:-0.08px">Permitir actualizar los coeficientes de pandeo en el plano xy</div><div class="cbu" style="left:334px;top:497px"></div><div class="t" style="left:350px;top:497px;letter-spacing:-0.08px">Permitir actualizar los coeficientes de pandeo en el plano xz</div><div class="a" style="left:323px;top:523px;width:356px;height:1px;background:#d2d2d2"></div><div class="a" style="left:323px;top:524px;width:356px;height:39px;background:#e9e9e9"></div><div class="a" style="left:330px;top:531px;width:73px;height:25px;border:1px solid #0067c0;border-radius:4px;background:#fdfdfd"></div><div class="t" style="left:330px;top:537px;width:73px;text-align:center">Aceptar</div><div class="a" style="left:604px;top:531px;width:68px;height:25px;border:1px solid #d2d2d2;border-radius:4px;background:#fbfbfb"></div><div class="t" style="left:604px;top:537px;width:68px;text-align:center;letter-spacing:-0.25px">Cancelar</div><div class="btn" style="left:345px;top:161px"><svg width="34" height="34" style="left:0px;top:0px"><text x="5.5" y="8.5" font-family="Liberation Sans" font-size="10.5" font-weight="bold">β<tspan dx="1">=</tspan><tspan dx="1">0</tspan></text><line x1="12.0" y1="12" x2="12.0" y2="30" stroke="#808080" stroke-width="1"/><line x1="11.5" y1="13" x2="8.0" y2="16.5" stroke="#888" stroke-width="0.9"/><line x1="11.5" y1="16" x2="8.0" y2="19.5" stroke="#888" stroke-width="0.9"/><line x1="11.5" y1="19" x2="8.0" y2="22.5" stroke="#888" stroke-width="0.9"/><line x1="11.5" y1="22" x2="8.0" y2="25.5" stroke="#888" stroke-width="0.9"/><line x1="11.5" y1="25" x2="8.0" y2="28.5" stroke="#888" stroke-width="0.9"/><line x1="11.5" y1="28" x2="8.0" y2="31.5" stroke="#888" stroke-width="0.9"/><line x1="18.5" y1="12" x2="18.5" y2="30" stroke="#808080" stroke-width="1"/><line x1="19" y1="16.5" x2="22.5" y2="13" stroke="#888" stroke-width="0.9"/><line x1="19" y1="19.5" x2="22.5" y2="16" stroke="#888" stroke-width="0.9"/><line x1="19" y1="22.5" x2="22.5" y2="19" stroke="#888" stroke-width="0.9"/><line x1="19" y1="25.5" x2="22.5" y2="22" stroke="#888" stroke-width="0.9"/><line x1="19" y1="28.5" x2="22.5" y2="25" stroke="#888" stroke-width="0.9"/><line x1="19" y1="31.5" x2="22.5" y2="28" stroke="#888" stroke-width="0.9"/><rect x="13.5" y="12.5" width="3.5" height="17" fill="#1ed2d8" stroke="#0a4aa8" stroke-width="1"/></svg></div><div class="btn" style="left:385px;top:161px"><svg width="34" height="34" style="left:0px;top:0px"><text x="4" y="7.8" font-family="Liberation Sans" font-size="10.5" font-weight="bold">β<tspan font-weight="normal" font-size="10" letter-spacing="-0.65">=0.5</tspan></text><line x1="7" y1="13.5" x2="23" y2="13.5" stroke="#000" stroke-width="1.2"/><line x1="8" y1="9.8" x2="11" y2="13" stroke="#000" stroke-width="1"/><line x1="11" y1="9.8" x2="14" y2="13" stroke="#000" stroke-width="1"/><line x1="14" y1="9.8" x2="17" y2="13" stroke="#000" stroke-width="1"/><line x1="17" y1="9.8" x2="20" y2="13" stroke="#000" stroke-width="1"/><line x1="20" y1="9.8" x2="23" y2="13" stroke="#000" stroke-width="1"/><rect x="13.5" y="14.0" width="3" height="15" fill="#1ed2d8" stroke="#0a4aa8" stroke-width="1"/><line x1="7" y1="29.5" x2="23" y2="29.5" stroke="#000" stroke-width="1.2"/><line x1="8" y1="30" x2="11" y2="33.2" stroke="#000" stroke-width="1"/><line x1="11" y1="30" x2="14" y2="33.2" stroke="#000" stroke-width="1"/><line x1="14" y1="30" x2="17" y2="33.2" stroke="#000" stroke-width="1"/><line x1="17" y1="30" x2="20" y2="33.2" stroke="#000" stroke-width="1"/><line x1="20" y1="30" x2="23" y2="33.2" stroke="#000" stroke-width="1"/></svg></div><div class="btn" style="left:425px;top:161px"><svg width="34" height="34" style="left:0px;top:0px"><text x="4" y="8.2" font-family="Liberation Sans" font-size="10.5" font-weight="bold">β<tspan font-weight="normal" font-size="10" letter-spacing="-0.65">=0.7</tspan></text><rect x="13.5" y="12.5" width="3" height="16.5" fill="#1ed2d8" stroke="#0a4aa8" stroke-width="1"/><polygon points="13,13.3 8.3,10.3 8.3,16.3" fill="#ffff00" stroke="#000" stroke-width="1"/><line x1="7" y1="29.5" x2="23" y2="29.5" stroke="#000" stroke-width="1.2"/><line x1="8" y1="30" x2="11" y2="33.2" stroke="#000" stroke-width="1"/><line x1="11" y1="30" x2="14" y2="33.2" stroke="#000" stroke-width="1"/><line x1="14" y1="30" x2="17" y2="33.2" stroke="#000" stroke-width="1"/><line x1="17" y1="30" x2="20" y2="33.2" stroke="#000" stroke-width="1"/><line x1="20" y1="30" x2="23" y2="33.2" stroke="#000" stroke-width="1"/></svg></div><div class="btn" style="left:465px;top:161px"><svg width="34" height="34" style="left:0px;top:0px"><text x="4" y="7.6" font-family="Liberation Sans" font-size="10.5" font-weight="bold">β<tspan font-weight="normal" font-size="10" letter-spacing="-0.85">=1.0</tspan></text><rect x="14.5" y="11.5" width="3" height="19" fill="#1ed2d8" stroke="#0a4aa8" stroke-width="1"/><polygon points="13.8,12.7 9.3,9.7 9.3,15.7" fill="#ffff00" stroke="#000" stroke-width="1"/><polygon points="13.8,29.3 9.3,26.3 9.3,32.3" fill="#ffff00" stroke="#000" stroke-width="1"/></svg></div><div class="btn" style="left:505px;top:161px"><svg width="34" height="34" style="left:0px;top:0px"><text x="5" y="8.2" font-family="Liberation Sans" font-size="10.5" font-weight="bold">β<tspan font-weight="normal" font-size="10" letter-spacing="-0.75">=2.0</tspan></text><rect x="13.5" y="10.5" width="3" height="17.5" fill="#1ed2d8" stroke="#0a4aa8" stroke-width="1"/><line x1="7" y1="28.5" x2="23" y2="28.5" stroke="#000" stroke-width="1.2"/><line x1="8" y1="29" x2="11" y2="32.2" stroke="#000" stroke-width="1"/><line x1="11" y1="29" x2="14" y2="32.2" stroke="#000" stroke-width="1"/><line x1="14" y1="29" x2="17" y2="32.2" stroke="#000" stroke-width="1"/><line x1="17" y1="29" x2="20" y2="32.2" stroke="#000" stroke-width="1"/><line x1="20" y1="29" x2="23" y2="32.2" stroke="#000" stroke-width="1"/></svg></div><div class="btn" style="left:545px;top:161px"><svg width="34" height="34" style="left:0px;top:0px"><text x="6" y="8.8" font-family="Liberation Sans" font-size="10.5" font-weight="bold">β<tspan dx="0.5">=</tspan><tspan dx="0">?</tspan></text><rect x="13.5" y="11.0" width="3" height="21.0" fill="#1ed2d8" stroke="#0a4aa8" stroke-width="1"/><rect x="13" y="10.5" width="4" height="3" fill="#000"/><rect x="14" y="11.5" width="2" height="1.2" fill="#ffff00"/><rect x="13" y="29.5" width="4" height="3" fill="#000"/><rect x="14" y="30.5" width="2" height="1.2" fill="#ffff00"/></svg></div><div class="btn p" style="left:584px;top:160px"><svg width="34" height="34" style="left:0px;top:0px"><text x="1.2" y="9.2" font-family="Liberation Sans" font-size="11.5" font-weight="bold" fill="#0000c8">L</text><text x="8.3" y="11.3" font-family="Liberation Sans" font-size="8" font-weight="bold" fill="#0000c8">k</text><text x="14.6" y="9.6" font-family="Liberation Sans" font-size="10" font-weight="bold" fill="#0000c8">=</text><text x="20.4" y="9.6" font-family="Liberation Sans" font-size="11.5" font-weight="bold" fill="#0000c8">?</text><rect x="15.8" y="10.5" width="3" height="21" fill="#1ed2d8" stroke="#0a4aa8" stroke-width="1"/><rect x="15.3" y="10" width="4" height="3" fill="#000"/><rect x="16.3" y="11" width="2" height="1.2" fill="#ffff00"/><rect x="15.3" y="29" width="4" height="3" fill="#000"/><rect x="16.3" y="30" width="2" height="1.2" fill="#ffff00"/></svg></div><div class="btn" style="left:625px;top:161px"><svg width="34" height="34" style="left:0px;top:0px"><rect x="4" y="0" width="3" height="28" fill="#1ed2d8"/><rect x="15" y="0" width="3" height="28" fill="#1ed2d8"/><rect x="26" y="14" width="3" height="14" fill="#1ed2d8"/><rect x="4" y="0" width="14" height="3" fill="#1ed2d8"/><rect x="4" y="14" width="25" height="3" fill="#1ed2d8"/><rect x="4.5" y="0.5" width="2" height="27" fill="none" stroke="#0a4aa8" stroke-width="1"/><rect x="15.5" y="0.5" width="2" height="27" fill="none" stroke="#0a4aa8" stroke-width="1"/><rect x="26.5" y="14.5" width="2" height="13" fill="none" stroke="#0a4aa8" stroke-width="1"/><rect x="4.5" y="0.5" width="13" height="2" fill="none" stroke="#0a4aa8" stroke-width="1"/><rect x="4.5" y="14.5" width="24" height="2" fill="none" stroke="#0a4aa8" stroke-width="1"/><rect x="0" y="28" width="33" height="4.5" fill="#000"/><line x1="0.8" y1="29.5" x2="2.6" y2="31.6" stroke="#fff" stroke-width="0.9"/><line x1="3.5999999999999996" y1="29.5" x2="5.4" y2="31.6" stroke="#fff" stroke-width="0.9"/><line x1="6.3999999999999995" y1="29.5" x2="8.2" y2="31.6" stroke="#fff" stroke-width="0.9"/><line x1="9.2" y1="29.5" x2="10.999999999999998" y2="31.6" stroke="#fff" stroke-width="0.9"/><line x1="12.0" y1="29.5" x2="13.799999999999999" y2="31.6" stroke="#fff" stroke-width="0.9"/><line x1="14.8" y1="29.5" x2="16.6" y2="31.6" stroke="#fff" stroke-width="0.9"/><line x1="17.599999999999998" y1="29.5" x2="19.4" y2="31.6" stroke="#fff" stroke-width="0.9"/><line x1="20.4" y1="29.5" x2="22.2" y2="31.6" stroke="#fff" stroke-width="0.9"/><line x1="23.2" y1="29.5" x2="25.0" y2="31.6" stroke="#fff" stroke-width="0.9"/><line x1="26.0" y1="29.5" x2="27.8" y2="31.6" stroke="#fff" stroke-width="0.9"/><line x1="28.8" y1="29.5" x2="30.6" y2="31.6" stroke="#fff" stroke-width="0.9"/><line x1="31.599999999999998" y1="29.5" x2="33.4" y2="31.6" stroke="#fff" stroke-width="0.9"/></svg></div><div class="btn" style="left:345px;top:254px"><svg width="34" height="34" style="left:0px;top:0px"><text x="5.5" y="8.5" font-family="Liberation Sans" font-size="10.5" font-weight="bold">β<tspan dx="1">=</tspan><tspan dx="1">0</tspan></text><line x1="12.0" y1="12" x2="12.0" y2="30" stroke="#808080" stroke-width="1"/><line x1="11.5" y1="13" x2="8.0" y2="16.5" stroke="#888" stroke-width="0.9"/><line x1="11.5" y1="16" x2="8.0" y2="19.5" stroke="#888" stroke-width="0.9"/><line x1="11.5" y1="19" x2="8.0" y2="22.5" stroke="#888" stroke-width="0.9"/><line x1="11.5" y1="22" x2="8.0" y2="25.5" stroke="#888" stroke-width="0.9"/><line x1="11.5" y1="25" x2="8.0" y2="28.5" stroke="#888" stroke-width="0.9"/><line x1="11.5" y1="28" x2="8.0" y2="31.5" stroke="#888" stroke-width="0.9"/><line x1="18.5" y1="12" x2="18.5" y2="30" stroke="#808080" stroke-width="1"/><line x1="19" y1="16.5" x2="22.5" y2="13" stroke="#888" stroke-width="0.9"/><line x1="19" y1="19.5" x2="22.5" y2="16" stroke="#888" stroke-width="0.9"/><line x1="19" y1="22.5" x2="22.5" y2="19" stroke="#888" stroke-width="0.9"/><line x1="19" y1="25.5" x2="22.5" y2="22" stroke="#888" stroke-width="0.9"/><line x1="19" y1="28.5" x2="22.5" y2="25" stroke="#888" stroke-width="0.9"/><line x1="19" y1="31.5" x2="22.5" y2="28" stroke="#888" stroke-width="0.9"/><rect x="13.5" y="12.5" width="3.5" height="17" fill="#1ed2d8" stroke="#0a4aa8" stroke-width="1"/></svg></div><div class="btn" style="left:385px;top:254px"><svg width="34" height="34" style="left:0px;top:0px"><text x="4" y="7.8" font-family="Liberation Sans" font-size="10.5" font-weight="bold">β<tspan font-weight="normal" font-size="10" letter-spacing="-0.65">=0.5</tspan></text><line x1="7" y1="13.5" x2="23" y2="13.5" stroke="#000" stroke-width="1.2"/><line x1="8" y1="9.8" x2="11" y2="13" stroke="#000" stroke-width="1"/><line x1="11" y1="9.8" x2="14" y2="13" stroke="#000" stroke-width="1"/><line x1="14" y1="9.8" x2="17" y2="13" stroke="#000" stroke-width="1"/><line x1="17" y1="9.8" x2="20" y2="13" stroke="#000" stroke-width="1"/><line x1="20" y1="9.8" x2="23" y2="13" stroke="#000" stroke-width="1"/><rect x="13.5" y="14.0" width="3" height="15" fill="#1ed2d8" stroke="#0a4aa8" stroke-width="1"/><line x1="7" y1="29.5" x2="23" y2="29.5" stroke="#000" stroke-width="1.2"/><line x1="8" y1="30" x2="11" y2="33.2" stroke="#000" stroke-width="1"/><line x1="11" y1="30" x2="14" y2="33.2" stroke="#000" stroke-width="1"/><line x1="14" y1="30" x2="17" y2="33.2" stroke="#000" stroke-width="1"/><line x1="17" y1="30" x2="20" y2="33.2" stroke="#000" stroke-width="1"/><line x1="20" y1="30" x2="23" y2="33.2" stroke="#000" stroke-width="1"/></svg></div><div class="btn" style="left:425px;top:254px"><svg width="34" height="34" style="left:0px;top:0px"><text x="4" y="8.2" font-family="Liberation Sans" font-size="10.5" font-weight="bold">β<tspan font-weight="normal" font-size="10" letter-spacing="-0.65">=0.7</tspan></text><rect x="13.5" y="12.5" width="3" height="16.5" fill="#1ed2d8" stroke="#0a4aa8" stroke-width="1"/><polygon points="13,13.3 8.3,10.3 8.3,16.3" fill="#ffff00" stroke="#000" stroke-width="1"/><line x1="7" y1="29.5" x2="23" y2="29.5" stroke="#000" stroke-width="1.2"/><line x1="8" y1="30" x2="11" y2="33.2" stroke="#000" stroke-width="1"/><line x1="11" y1="30" x2="14" y2="33.2" stroke="#000" stroke-width="1"/><line x1="14" y1="30" x2="17" y2="33.2" stroke="#000" stroke-width="1"/><line x1="17" y1="30" x2="20" y2="33.2" stroke="#000" stroke-width="1"/><line x1="20" y1="30" x2="23" y2="33.2" stroke="#000" stroke-width="1"/></svg></div><div class="btn p" style="left:464px;top:253px"><svg width="34" height="34" style="left:0px;top:0px"><text x="4" y="7.6" font-family="Liberation Sans" font-size="10.5" font-weight="bold">β<tspan font-weight="normal" font-size="10" letter-spacing="-0.85">=1.0</tspan></text><rect x="14.5" y="11.5" width="3" height="19" fill="#1ed2d8" stroke="#0a4aa8" stroke-width="1"/><polygon points="13.8,12.7 9.3,9.7 9.3,15.7" fill="#ffff00" stroke="#000" stroke-width="1"/><polygon points="13.8,29.3 9.3,26.3 9.3,32.3" fill="#ffff00" stroke="#000" stroke-width="1"/></svg></div><div class="btn" style="left:505px;top:254px"><svg width="34" height="34" style="left:0px;top:0px"><text x="5" y="8.2" font-family="Liberation Sans" font-size="10.5" font-weight="bold">β<tspan font-weight="normal" font-size="10" letter-spacing="-0.75">=2.0</tspan></text><rect x="13.5" y="10.5" width="3" height="17.5" fill="#1ed2d8" stroke="#0a4aa8" stroke-width="1"/><line x1="7" y1="28.5" x2="23" y2="28.5" stroke="#000" stroke-width="1.2"/><line x1="8" y1="29" x2="11" y2="32.2" stroke="#000" stroke-width="1"/><line x1="11" y1="29" x2="14" y2="32.2" stroke="#000" stroke-width="1"/><line x1="14" y1="29" x2="17" y2="32.2" stroke="#000" stroke-width="1"/><line x1="17" y1="29" x2="20" y2="32.2" stroke="#000" stroke-width="1"/><line x1="20" y1="29" x2="23" y2="32.2" stroke="#000" stroke-width="1"/></svg></div><div class="btn" style="left:545px;top:254px"><svg width="34" height="34" style="left:0px;top:0px"><text x="6" y="8.8" font-family="Liberation Sans" font-size="10.5" font-weight="bold">β<tspan dx="0.5">=</tspan><tspan dx="0">?</tspan></text><rect x="13.5" y="11.0" width="3" height="21.0" fill="#1ed2d8" stroke="#0a4aa8" stroke-width="1"/><rect x="13" y="10.5" width="4" height="3" fill="#000"/><rect x="14" y="11.5" width="2" height="1.2" fill="#ffff00"/><rect x="13" y="29.5" width="4" height="3" fill="#000"/><rect x="14" y="30.5" width="2" height="1.2" fill="#ffff00"/></svg></div><div class="btn" style="left:585px;top:254px"><svg width="34" height="34" style="left:0px;top:0px"><text x="1.2" y="9.2" font-family="Liberation Sans" font-size="11.5" font-weight="bold" fill="#0000c8">L</text><text x="8.3" y="11.3" font-family="Liberation Sans" font-size="8" font-weight="bold" fill="#0000c8">k</text><text x="14.6" y="9.6" font-family="Liberation Sans" font-size="10" font-weight="bold" fill="#0000c8">=</text><text x="20.4" y="9.6" font-family="Liberation Sans" font-size="11.5" font-weight="bold" fill="#0000c8">?</text><rect x="15.8" y="10.5" width="3" height="21" fill="#1ed2d8" stroke="#0a4aa8" stroke-width="1"/><rect x="15.3" y="10" width="4" height="3" fill="#000"/><rect x="16.3" y="11" width="2" height="1.2" fill="#ffff00"/><rect x="15.3" y="29" width="4" height="3" fill="#000"/><rect x="16.3" y="30" width="2" height="1.2" fill="#ffff00"/></svg></div><div class="btn" style="left:625px;top:254px"><svg width="34" height="34" style="left:0px;top:0px"><rect x="4" y="0" width="3" height="28" fill="#1ed2d8"/><rect x="15" y="0" width="3" height="28" fill="#1ed2d8"/><rect x="26" y="14" width="3" height="14" fill="#1ed2d8"/><rect x="4" y="0" width="14" height="3" fill="#1ed2d8"/><rect x="4" y="14" width="25" height="3" fill="#1ed2d8"/><rect x="4.5" y="0.5" width="2" height="27" fill="none" stroke="#0a4aa8" stroke-width="1"/><rect x="15.5" y="0.5" width="2" height="27" fill="none" stroke="#0a4aa8" stroke-width="1"/><rect x="26.5" y="14.5" width="2" height="13" fill="none" stroke="#0a4aa8" stroke-width="1"/><rect x="4.5" y="0.5" width="13" height="2" fill="none" stroke="#0a4aa8" stroke-width="1"/><rect x="4.5" y="14.5" width="24" height="2" fill="none" stroke="#0a4aa8" stroke-width="1"/><rect x="0" y="28" width="33" height="4.5" fill="#000"/><line x1="0.8" y1="29.5" x2="2.6" y2="31.6" stroke="#fff" stroke-width="0.9"/><line x1="3.5999999999999996" y1="29.5" x2="5.4" y2="31.6" stroke="#fff" stroke-width="0.9"/><line x1="6.3999999999999995" y1="29.5" x2="8.2" y2="31.6" stroke="#fff" stroke-width="0.9"/><line x1="9.2" y1="29.5" x2="10.999999999999998" y2="31.6" stroke="#fff" stroke-width="0.9"/><line x1="12.0" y1="29.5" x2="13.799999999999999" y2="31.6" stroke="#fff" stroke-width="0.9"/><line x1="14.8" y1="29.5" x2="16.6" y2="31.6" stroke="#fff" stroke-width="0.9"/><line x1="17.599999999999998" y1="29.5" x2="19.4" y2="31.6" stroke="#fff" stroke-width="0.9"/><line x1="20.4" y1="29.5" x2="22.2" y2="31.6" stroke="#fff" stroke-width="0.9"/><line x1="23.2" y1="29.5" x2="25.0" y2="31.6" stroke="#fff" stroke-width="0.9"/><line x1="26.0" y1="29.5" x2="27.8" y2="31.6" stroke="#fff" stroke-width="0.9"/><line x1="28.8" y1="29.5" x2="30.6" y2="31.6" stroke="#fff" stroke-width="0.9"/><line x1="31.599999999999998" y1="29.5" x2="33.4" y2="31.6" stroke="#fff" stroke-width="0.9"/></svg></div><svg class="a" style="left:680px;top:8px" width="20" height="25" viewBox="680 8 20 25"><line x1="685" y1="12" x2="685" y2="28.5" stroke="#0000ff" stroke-width="1.6"/><line x1="685" y1="15.5" x2="686.5" y2="15.5" stroke="#0000ff" stroke-width="1.2"/><line x1="684.5" y1="28.5" x2="700" y2="28.5" stroke="#00e000" stroke-width="1.3"/><polygon points="701,28.5 697.5,26.8 697.5,30.2" fill="#00e000"/></svg></body></html>
